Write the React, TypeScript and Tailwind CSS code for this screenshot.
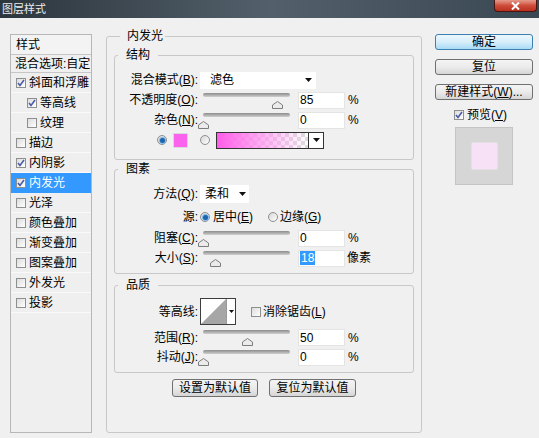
import type { ReactNode } from 'react';

// Photoshop "图层样式" dialog, 内发光 page

function Check({ on }: { on?: boolean }) {
  return (
    <span className="w-[10px] h-[10px] shrink-0 border border-[#8e8f8f] bg-linear-to-br from-[#dcdcdc] to-white flex items-center justify-center">
      {on && (
        <svg width="8" height="8" viewBox="0 0 8 8">
          <path d="M1 4 L3 6.5 L7 1" fill="none" stroke="#4b5da8" strokeWidth="1.6" />
        </svg>
      )}
    </span>
  );
}

function Radio({ on }: { on?: boolean }) {
  return (
    <span className="w-[10px] h-[10px] shrink-0 rounded-full border border-[#8f8f8f] bg-linear-to-br from-[#d6d6d6] to-white flex items-center justify-center">
      {on && <span className="w-[5px] h-[5px] rounded-full bg-[#1d66ad] ring-1 ring-[#7fb8e6]" />}
    </span>
  );
}

function Arrow() {
  return (
    <svg width="7" height="4" viewBox="0 0 7 4">
      <path d="M0 0 H7 L3.5 4 Z" fill="#111" />
    </svg>
  );
}

function Slider({ left }: { left: number }) {
  return (
    <div className="relative w-[93px] h-[20px] shrink-0">
      <div className="mt-[5px] mx-[3px] h-[4px] rounded-full bg-linear-to-b from-[#8c8c8c] to-[#cfcfcf]" />
      <svg className="absolute top-[8px]" style={{ left }} width="11" height="8" viewBox="0 0 11 8">
        <path d="M0.5 7.5 V4 L5.5 0.5 L10.5 4 V7.5 Z" fill="#ebebeb" stroke="#7d7d7d" />
      </svg>
    </div>
  );
}

function Num({ children }: { children: ReactNode }) {
  return (
    <div className="ml-[5px] w-[47px] h-[17px] bg-white border border-[#e4e4e4] flex items-center pl-[1px]">
      {children}
    </div>
  );
}

function Label({ children }: { children: ReactNode }) {
  return <span className="w-[83px] shrink-0 text-right">{children}</span>;
}

function Btn({ children, primary, className }: { children: ReactNode; primary?: boolean; className?: string }) {
  return (
    <div
      className={
        (primary
          ? 'border-[#3c7fb1] from-[#ecf7fd] via-[#d7effb] to-[#a9daf5] '
          : 'border-[#707070] from-[#f4f4f4] via-[#ebebeb] to-[#d5d5d5] ') +
        'h-[16px] border rounded-[3px] bg-linear-to-b flex items-center justify-center ' +
        (className ?? '')
      }
    >
      {children}
    </div>
  );
}

const styles = [
  { label: '斜面和浮雕', on: true },
  { label: '等高线', on: true, sub: true },
  { label: '纹理', sub: true },
  { label: '描边' },
  { label: '内阴影', on: true },
  { label: '内发光', on: true, active: true },
  { label: '光泽' },
  { label: '颜色叠加' },
  { label: '渐变叠加' },
  { label: '图案叠加' },
  { label: '外发光' },
  { label: '投影' },
];

export default function App() {
  return (
    <div className="w-[539px] h-[438px] overflow-hidden bg-[#f0f0f0] text-[12px] leading-[14px] text-black font-['Liberation_Sans','Noto_Sans_CJK_SC',sans-serif]">
      {/* title bar */}
      <div className="h-[18px] flex items-start justify-between bg-linear-to-r from-[#2c363d] via-[#53606b] to-[#3a4853]">
        <span className="pl-[2px] pt-[2px] text-[11px] text-[#ececec]">图层样式</span>
        <div className="mr-[2px] w-[43px] h-[12px] rounded-b-[4px] border border-t-0 border-[#4a1510] bg-linear-to-b from-[#e49a8c] via-[#cf4b3a] to-[#b8301f] flex items-center justify-center">
          <svg width="9" height="8" viewBox="0 0 9 8">
            <path d="M1 0.5 L8 7.5 M8 0.5 L1 7.5" stroke="white" strokeWidth="2" />
          </svg>
        </div>
      </div>

      <div className="flex items-start pt-[11px]">
        {/* left style list */}
        <div className="ml-[10px] mt-[5px] w-[82px] h-[399px] border border-[#b7b7b7] bg-[#efefef] flex flex-col">
          <div className="h-[20px] border-b border-[#c6c6c6] pl-[5px] flex items-center bg-[#f3f3f3]">样式</div>
          <div className="h-[18px] border-b border-[#c6c6c6] pl-[4px] flex items-center">混合选项:自定</div>
          {styles.map((s) => (
            <div
              key={s.label}
              className={
                'h-[20px] flex items-center gap-[3px] border-b ' +
                (s.sub ? 'pl-[16px] ' : 'pl-[5px] ') +
                (s.active ? 'bg-[#3399ff] text-white border-[#3399ff]' : 'border-[#f9f9f9]')
              }
            >
              <Check on={s.on} />
              <span>{s.label}</span>
            </div>
          ))}
        </div>

        {/* main options */}
        <fieldset className="ml-[14px] w-[316px] border border-[#c8c8c8] rounded-[3px] px-[7px] pt-[5px] pb-[35px]">
          <legend className="ml-[6px] pl-[7px] pr-[2px]">内发光</legend>

          <fieldset className="border border-[#c8c8c8] rounded-[3px] pt-[8px] pb-[9px]">
            <legend className="ml-[3px] px-[8px]">结构</legend>
            <div className="h-[20px] flex items-center">
              <Label>混合模式(<u>B</u>):</Label>
              <div className="ml-[2px] w-[116px] h-[17px] bg-white flex items-center justify-between pl-[10px] pr-[4px]">
                <span>滤色</span>
                <Arrow />
              </div>
            </div>
            <div className="h-[20px] flex items-center">
              <Label>不透明度(<u>O</u>):</Label>
              <div className="ml-[2px]"><Slider left={72} /></div>
              <Num>85</Num>
              <span className="ml-[3px]">%</span>
            </div>
            <div className="h-[20px] flex items-center">
              <Label>杂色(<u>N</u>):</Label>
              <div className="ml-[2px]"><Slider left={-2} /></div>
              <Num>0</Num>
              <span className="ml-[3px]">%</span>
            </div>
            <div className="h-[20px] flex items-center pl-[42px]">
              <Radio on />
              <div className="ml-[6px] w-[15px] h-[15px] bg-[#fa62ee] border border-[#d9d9d9]" />
              <div className="ml-[12px]"><Radio /></div>
              <div className="ml-[6px] w-[108px] h-[17px] border border-[#333] flex">
                <div className="flex-1 bg-[repeating-conic-gradient(#dedede_0%_25%,#ffffff_0%_50%)] bg-[length:8px_8px]">
                  <div className="h-full bg-linear-to-r from-[#ff5ce9] via-[#ff8ef0]/70 to-[#ffc0f6]/0" />
                </div>
                <div className="w-[15px] border-l border-[#333] bg-white flex items-center justify-center">
                  <Arrow />
                </div>
              </div>
            </div>
          </fieldset>

          <fieldset className="mt-[2px] border border-[#c8c8c8] rounded-[3px] pt-[8px] pb-[5px]">
            <legend className="ml-[3px] px-[8px]">图素</legend>
            <div className="h-[20px] flex items-center">
              <Label>方法(<u>Q</u>):</Label>
              <div className="ml-[2px] w-[49px] h-[18px] bg-white flex items-center justify-between pl-[5px] pr-[3px]">
                <span>柔和</span>
                <Arrow />
              </div>
            </div>
            <div className="mt-[3px] h-[20px] flex items-center">
              <Label>源:</Label>
              <div className="ml-[2px]"><Radio on /></div>
              <span className="ml-[3px]">居中(<u>E</u>)</span>
              <div className="ml-[15px]"><Radio /></div>
              <span className="ml-[2px]">边缘(<u>G</u>)</span>
            </div>
            <div className="mt-[1px] h-[20px] flex items-center">
              <Label>阻塞(<u>C</u>):</Label>
              <div className="ml-[2px]"><Slider left={-2} /></div>
              <Num>0</Num>
              <span className="ml-[3px]">%</span>
            </div>
            <div className="h-[20px] flex items-center">
              <Label>大小(<u>S</u>):</Label>
              <div className="ml-[2px]"><Slider left={10} /></div>
              <Num>
                <span className="bg-[#3399ff] text-white px-[1px]">18</span>
              </Num>
              <span className="ml-[2px]">像素</span>
            </div>
          </fieldset>

          <fieldset className="mt-[4px] border border-[#c8c8c8] rounded-[3px] pt-[6px] pb-[5px]">
            <legend className="ml-[3px] px-[8px]">品质</legend>
            <div className="h-[27px] flex items-center">
              <Label>等高线:</Label>
              <div className="ml-[2px] w-[36px] h-[27px] border border-[#3d3d3d] flex bg-white">
                <svg className="flex-1" width="25" height="25" viewBox="0 0 25 25" preserveAspectRatio="none">
                  <path d="M0 25 L25 0 V25 Z" fill="#a6a6a6" />
                </svg>
                <div className="w-[9px] border-l border-[#9a9a9a] flex items-center justify-center">
                  <svg width="5" height="3" viewBox="0 0 5 3">
                    <path d="M0 0 H5 L2.5 3 Z" fill="#111" />
                  </svg>
                </div>
              </div>
              <div className="ml-[15px]"><Check /></div>
              <span className="ml-[2px]">消除锯齿(<u>L</u>)</span>
            </div>
            <div className="mt-[3px] h-[19px] flex items-center">
              <Label>范围(<u>R</u>):</Label>
              <div className="ml-[2px]"><Slider left={42} /></div>
              <Num>50</Num>
              <span className="ml-[3px]">%</span>
            </div>
            <div className="h-[20px] flex items-center">
              <Label>抖动(<u>J</u>):</Label>
              <div className="ml-[2px]"><Slider left={-2} /></div>
              <Num>0</Num>
              <span className="ml-[3px]">%</span>
            </div>
          </fieldset>

          <div className="mt-[6px] flex justify-center gap-[11px]">
            <Btn className="w-[86px] h-[18px]">设置为默认值</Btn>
            <Btn className="w-[87px] h-[18px]">复位为默认值</Btn>
          </div>
        </fieldset>

        {/* right column */}
        <div className="ml-[13px] mt-[5px] w-[98px] flex flex-col">
          <Btn primary>确定</Btn>
          <Btn className="mt-[9px]">复位</Btn>
          <Btn className="mt-[9px]">
            新建样式(<u>W</u>)...
          </Btn>
          <div className="mt-[8px] h-[14px] pl-[19px] flex items-center gap-[3px]">
            <Check on />
            <span>预览(<u>V</u>)</span>
          </div>
          <div className="mt-[5px] ml-[20px] w-[58px] h-[58px] bg-[#d6d6d6] border border-[#c4c4c4] flex items-center justify-center">
            <div className="w-[25px] h-[26px] bg-[#f7e1f6] shadow-[0_0_2px_#fdf2fd]" />
          </div>
        </div>
      </div>
    </div>
  );
}
